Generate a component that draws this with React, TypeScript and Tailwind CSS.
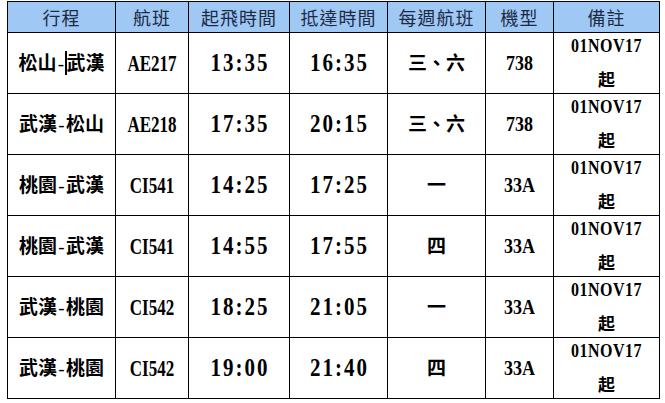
import React from 'react';

const rows = [
  { route: ['松山', '武漢'], cursor: true, flight: 'AE217', dep: '13:35', arr: '16:35', days: '三、六', type: '738' },
  { route: ['武漢', '松山'], flight: 'AE218', dep: '17:35', arr: '20:15', days: '三、六', type: '738' },
  { route: ['桃園', '武漢'], flight: 'CI541', dep: '14:25', arr: '17:25', days: '一', type: '33A' },
  { route: ['桃園', '武漢'], flight: 'CI541', dep: '14:55', arr: '17:55', days: '四', type: '33A' },
  { route: ['武漢', '桃園'], flight: 'CI542', dep: '18:25', arr: '21:05', days: '一', type: '33A' },
  { route: ['武漢', '桃園'], flight: 'CI542', dep: '19:00', arr: '21:40', days: '四', type: '33A' },
];

const headers = ['行程', '航班', '起飛時間', '抵達時間', '每週航班', '機型', '備註'];
const widths = ['w-[108px]', 'w-[73px]', 'w-[101px]', 'w-[98px]', 'w-[98px]', 'w-[68px]', 'w-[106px]'];

const cjk = "font-['Liberation_Serif','Noto_Sans_CJK_TC',serif]";

export default function App() {
  return (
    <div className="w-[665px] h-[403px] bg-white pl-[7px] pt-[1px]">
      <table className={`border-collapse table-fixed w-[652px] ${cjk}`}>
        <colgroup>
          {widths.map((w, i) => (
            <col key={i} className={w} />
          ))}
        </colgroup>
        <thead>
          <tr className="h-[31px] bg-[#9fc8f5]">
            {headers.map((h) => (
              <th key={h} className="border border-black text-[18px] font-normal text-[#1d2a44] tracking-[1px] font-['Noto_Sans_CJK_TC',sans-serif] leading-none">
                {h}
              </th>
            ))}
          </tr>
        </thead>
        <tbody>
          {rows.map((r, i) => (
            <tr key={i} className="h-[61px] text-black text-center">
              <td className="border border-black text-[19px] font-bold leading-none">
                <span className="inline-flex items-center">
                  {r.route[0]}
                  <span className="font-normal w-[9px] text-center">-</span>
                  {r.cursor && <span className="inline-block w-[2px] h-[24px] bg-black -ml-[1px]" />}
                  {r.route[1]}
                </span>
              </td>
              <td className="border border-black text-[17px] font-bold leading-none">
                <span className="inline-block scale-y-[1.3]">{r.flight}</span>
              </td>
              <td className="border border-black text-[21px] font-bold leading-none tracking-[2px]">
                <span className="inline-block scale-y-[1.2] pl-[2px]">{r.dep}</span>
              </td>
              <td className="border border-black text-[21px] font-bold leading-none tracking-[2px]">
                <span className="inline-block scale-y-[1.2] pl-[2px]">{r.arr}</span>
              </td>
              <td className="border border-black text-[19px] font-bold leading-none">{r.days}</td>
              <td className="border border-black text-[18px] font-bold leading-none">
                <span className="inline-block scale-y-[1.2]">{r.type}</span>
              </td>
              <td className="border border-black align-top">
                <div className="h-[60px] flex flex-col items-center">
                  <div className="text-[16px] font-bold leading-[20px] pt-[3px] tracking-[0.5px]">
                    <span className="inline-block scale-y-[1.15]">01NOV17</span>
                  </div>
                  <div className="text-[17px] font-bold leading-[20px] mt-[15px]">起</div>
                </div>
              </td>
            </tr>
          ))}
        </tbody>
      </table>
    </div>
  );
}
